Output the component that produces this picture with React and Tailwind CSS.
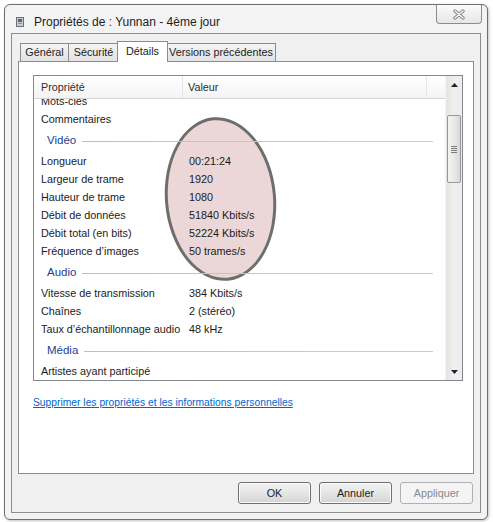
import React from 'react'

const items = [
  { name: 'Mots-clés', value: '' },
  { name: 'Commentaires', value: '' },
  { group: 'Vidéo' },
  { name: 'Longueur', value: '00:21:24' },
  { name: 'Largeur de trame', value: '1920' },
  { name: 'Hauteur de trame', value: '1080' },
  { name: 'Débit de données', value: '51840 Kbits/s' },
  { name: 'Débit total (en bits)', value: '52224 Kbits/s' },
  { name: 'Fréquence d’images', value: '50 trames/s' },
  { group: 'Audio' },
  { name: 'Vitesse de transmission', value: '384 Kbits/s' },
  { name: 'Chaînes', value: '2 (stéréo)' },
  { name: 'Taux d’échantillonnage audio', value: '48 kHz' },
  { group: 'Média' },
  { name: 'Artistes ayant participé', value: '' },
]

const Row = ({ item }) => {
  if (item.group) {
    return (
      <div className="relative z-10 h-[24px] flex items-center pl-[13px] pr-[12px] pt-[2px]">
        <span className="text-[#253d8f] text-[11.5px]">{item.group}</span>
        <div className="flex-1 h-px ml-[6px] bg-gradient-to-r from-[#b7c0cc] to-[#c7ced8]" />
      </div>
    )
  }
  return (
    <div className="relative z-10 h-[18px] flex items-center text-[#1b1b1b]">
      <div className="w-[149px] pl-[7px] whitespace-nowrap">{item.name}</div>
      <div className="pl-[6px] whitespace-nowrap">{item.value}</div>
    </div>
  )
}

const Tab = ({ label, className }) => (
  <div
    className={`h-[18px] mt-[2px] flex items-center justify-center border-t border-[#898c95] bg-gradient-to-b from-[#f4f4f4] to-[#e2e2e2] text-[#222] ${className}`}
  >
    {label}
  </div>
)

const Button = ({ label, disabled }) => (
  <div
    className={
      disabled
        ? 'w-[73px] h-[22px] rounded-[3px] border border-[#adb2b5] bg-[#f4f4f4] flex items-center justify-center text-[#8a8a8a]'
        : 'w-[73px] h-[22px] rounded-[3px] border border-[#707070] bg-gradient-to-b from-[#f2f2f2] via-[#e6e6e6] to-[#d3d3d3] shadow-[inset_0_0_0_1px_#fcfcfc] flex items-center justify-center text-[#1b1b1b]'
    }
  >
    {label}
  </div>
)

export default function App() {
  return (
    <div className="w-[493px] h-[522px] bg-white pt-[4px] pl-[4px] font-['Liberation_Sans',Arial,sans-serif] text-[10.8px] overflow-hidden">
      {/* fenêtre */}
      <div className="w-[484px] h-[516px] flex flex-col rounded-[6px] border border-[#6f6f6f] bg-[#f3f3f3] shadow-[1px_1px_3px_rgba(0,0,0,0.25)]">
        {/* barre de titre */}
        <div className="h-[28px] flex items-start">
          <div className="flex items-center pl-[11px] pt-[8px]">
            <svg width="8" height="10" viewBox="0 0 8 10">
              <rect x="0.5" y="0.5" width="7" height="9" fill="#c9cdd2" stroke="#6d7179" />
              <rect x="2" y="2" width="4" height="3" fill="#5d6570" />
              <rect x="2" y="6" width="4" height="1" fill="#8a9099" />
            </svg>
            <span className="ml-[10px] text-[12px] text-[#1e1e1e]">Propriétés de : Yunnan - 4ème jour</span>
          </div>
          <div className="ml-auto mr-[5px] w-[46px] h-[19px] rounded-b-[4px] border border-t-0 border-[#8d8d8d] bg-gradient-to-b from-[#fbfbfb] to-[#e6e6e6] flex items-center justify-center">
            <svg width="14" height="11" viewBox="0 0 14 11">
              <path d="M3 2 L11 9 M11 2 L3 9" stroke="#8a8a8a" strokeWidth="3.4" strokeLinecap="round" />
              <path d="M3 2 L11 9 M11 2 L3 9" stroke="#f6f6f6" strokeWidth="1.4" strokeLinecap="round" />
            </svg>
          </div>
        </div>

        {/* zone cliente */}
        <div className="mx-[6px] mb-[6px] flex-1 border border-[#8e8e8e] bg-[#f0f0f0] flex flex-col">
          <div className="ml-[6px] mt-[7px] w-[456px]">
            {/* onglets */}
            <div className="flex h-[20px] pl-[2px] items-start">
              <Tab label="Général" className="w-[49px] border-l border-r" />
              <Tab label="Sécurité" className="w-[50px] border-r" />
              <div className="relative z-10 -ml-[2px] w-[51px] h-[21px] border border-b-0 border-[#898c95] bg-white flex items-center justify-center pb-[2px] text-[#1b1b1b]">
                Détails
              </div>
              <Tab label="Versions précédentes" className="-ml-[2px] w-[110px] border-l border-r" />
            </div>

            {/* panneau */}
            <div className="h-[413px] border border-[#898c95] bg-white pl-[14px] pt-[13px]">
              <div className="w-[430px] h-[306px] border border-[#828790] flex">
                <div className="flex-1 flex flex-col">
                  {/* en-tête */}
                  <div className="h-[23px] flex border-b border-[#d5d5d5] bg-gradient-to-b from-white to-[#f3f4f6] text-[#2e2e2e]">
                    <div className="w-[149px] pl-[7px] flex items-center border-r border-[#e3e5e8]">Propriété</div>
                    <div className="w-[244px] pl-[5px] flex items-center border-r border-[#e3e5e8]">Valeur</div>
                  </div>
                  {/* contenu */}
                  <div className="relative flex-1 overflow-hidden">
                    <div className="absolute left-[131px] top-[18px] w-[111px] h-[164px] rounded-[50%] border-[3px] border-[#6e6e6e] bg-[#ebd7d7] rotate-[-5deg] pointer-events-none" />
                    <div className="-mt-[7px]">
                      {items.map((item, i) => (
                        <Row key={i} item={item} />
                      ))}
                    </div>
                  </div>
                </div>
                {/* barre de défilement */}
                <div className="w-[17px] flex flex-col bg-gradient-to-r from-[#e4e4e4] via-[#efefef] to-[#ececec] border-l border-[#f4f4f4]">
                  <div className="h-[17px] flex items-center justify-center">
                    <svg width="7" height="4" viewBox="0 0 7 4">
                      <path d="M0 4 L3.5 0 L7 4 Z" fill="#222" />
                    </svg>
                  </div>
                  <div className="mt-[22px] mx-[1px] h-[68px] rounded-[2px] border border-[#979797] bg-gradient-to-r from-[#f3f3f3] via-[#e9e9e9] to-[#d8d8d8] flex flex-col items-center justify-center gap-[1px]">
                    <div className="w-[6px] h-px bg-[#7a7a7a]" />
                    <div className="w-[6px] h-px bg-[#7a7a7a]" />
                    <div className="w-[6px] h-px bg-[#7a7a7a]" />
                    <div className="w-[6px] h-px bg-[#7a7a7a]" />
                  </div>
                  <div className="mt-auto h-[17px] flex items-center justify-center">
                    <svg width="7" height="4" viewBox="0 0 7 4">
                      <path d="M0 0 L3.5 4 L7 0 Z" fill="#222" />
                    </svg>
                  </div>
                </div>
              </div>
              <div className="mt-[14px] text-[10.3px] text-[#0066cc] underline">
                Supprimer les propriétés et les informations personnelles
              </div>
            </div>
          </div>

          {/* boutons */}
          <div className="mt-[8px] pr-[7px] flex justify-end gap-[8px]">
            <Button label="OK" />
            <Button label="Annuler" />
            <Button label="Appliquer" disabled />
          </div>
        </div>
      </div>
    </div>
  )
}
